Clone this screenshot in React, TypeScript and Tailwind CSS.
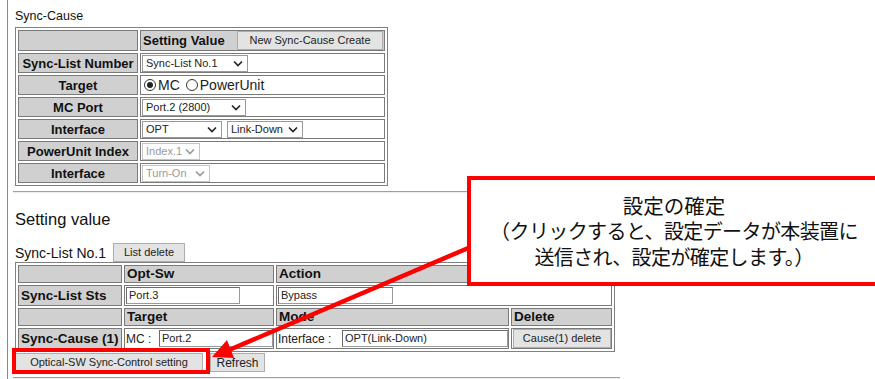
import type { ReactNode } from 'react';

const lbl =
  'border border-[#7a7a7a] bg-[#d0d0d0] font-bold text-[13px] leading-[15px] text-center text-[#111] p-0 h-[20px] whitespace-nowrap';
const val = 'border border-[#7a7a7a] bg-white p-0 pl-[1px] h-[20px] leading-none';
const lbl2 =
  'border border-[#7a7a7a] bg-[#d0d0d0] font-bold text-[13.5px] leading-[16px] text-left text-[#111] p-0 pl-[2px] whitespace-nowrap';
const val2 = 'border border-[#7a7a7a] bg-white p-0 pl-[1px] leading-none';
const btn =
  'h-[19px] border border-[#adadad] bg-[#e3e3e3] text-[11px] text-[#222] leading-none flex items-center justify-center whitespace-nowrap font-normal';

function Chevron({ muted }: { muted?: boolean }) {
  return (
    <svg width="10" height="7" viewBox="0 0 10 7" className="shrink-0">
      <path d="M1 1.5 L5 5.5 L9 1.5" fill="none" stroke={muted ? '#9a9a9a' : '#222'} strokeWidth={1.6} />
    </svg>
  );
}

function Sel({ text, className, disabled }: { text: string; className: string; disabled?: boolean }) {
  return (
    <div
      className={`h-[17px] flex items-center justify-between pl-[3px] pr-[4px] bg-white text-[11px] leading-none border ${
        disabled ? 'border-[#c4c4c4] text-[#9a9a9a]' : 'border-[#9a9a9a] text-[#222]'
      } ${className}`}
    >
      <span className="whitespace-nowrap">{text}</span>
      <Chevron muted={disabled} />
    </div>
  );
}

function Field({ text, className }: { text: string; className: string }) {
  return (
    <div
      className={`h-[17px] shrink-0 flex items-center pl-[2px] bg-white border border-[#9a9a9a] border-t-[#6a6a6a] border-l-[#6a6a6a] text-[11px] text-[#222] leading-none whitespace-nowrap ${className}`}
    >
      {text}
    </div>
  );
}

function Radio({ checked, children }: { checked?: boolean; children: ReactNode }) {
  return (
    <span className="flex items-center gap-[2px] text-[14px] leading-[16px] text-[#222]">
      <span className="w-[12px] h-[12px] rounded-full border border-[#333] bg-white flex items-center justify-center">
        {checked && <span className="w-[6px] h-[6px] rounded-full bg-[#222]" />}
      </span>
      {children}
    </span>
  );
}

export default function App() {
  return (
    <div className="relative w-[875px] h-[379px] overflow-hidden bg-white font-['Liberation_Sans',Arial,sans-serif] text-[#111]">
      <div className="pl-[7px] h-full">
        <div className="border-l border-[#8a8a8a] pl-[7px] h-full">
          {/* Sync-Cause */}
          <div className="pt-[9px] mb-[4px] text-[12.5px] leading-[14px]">Sync-Cause</div>
          <table className="table-fixed border-separate border-spacing-[2px] border border-[#808080] w-[373px] leading-none">
            <colgroup>
              <col className="w-[120px]" />
              <col className="w-[245px]" />
            </colgroup>
            <tbody>
              <tr>
                <td className={lbl}></td>
                <td className={`${lbl} text-left`}>
                  <div className="flex items-center justify-between pl-[2px] pr-[1px]">
                    <span>Setting Value</span>
                    <button className={`${btn} w-[146px] h-[18px] text-[11.5px]`}>New Sync-Cause Create</button>
                  </div>
                </td>
              </tr>
              <tr>
                <td className={lbl}>Sync-List Number</td>
                <td className={val}>
                  <Sel text="Sync-List No.1" className="w-[106px]" />
                </td>
              </tr>
              <tr>
                <td className={lbl}>Target</td>
                <td className={val}>
                  <div className="flex items-center gap-[6px] pl-[2px]">
                    <Radio checked>MC</Radio>
                    <Radio>PowerUnit</Radio>
                  </div>
                </td>
              </tr>
              <tr>
                <td className={lbl}>MC Port</td>
                <td className={val}>
                  <Sel text="Port.2 (2800)" className="w-[104px]" />
                </td>
              </tr>
              <tr>
                <td className={lbl}>Interface</td>
                <td className={val}>
                  <div className="flex items-center gap-[5px]">
                    <Sel text="OPT" className="w-[80px]" />
                    <Sel text="Link-Down" className="w-[76px]" />
                  </div>
                </td>
              </tr>
              <tr>
                <td className={lbl}>PowerUnit Index</td>
                <td className={val}>
                  <Sel text="Index.1" className="w-[58px]" disabled />
                </td>
              </tr>
              <tr>
                <td className={lbl}>Interface</td>
                <td className={val}>
                  <Sel text="Turn-On" className="w-[68px]" disabled />
                </td>
              </tr>
            </tbody>
          </table>

          <div className="mt-[5px] -ml-[2px] w-[607px] h-[2px] border-t border-[#a0a0a0] border-b border-b-[#ececec]" />

          {/* Setting value */}
          <div className="mt-[17px] h-[19px] text-[16.5px] leading-[19px]">Setting value</div>
          <div className="mt-[14px] h-[19px] flex items-end gap-[7px]">
            <span className="text-[14px] leading-[18px]">Sync-List No.1</span>
            <button className={`${btn} w-[72px] text-[11.5px]`}>List delete</button>
          </div>
          <table className="table-fixed border-separate border-spacing-[2px] border border-[#808080] w-[600px] leading-none">
            <colgroup>
              <col className="w-[104px]" />
              <col className="w-[150px]" />
              <col className="w-[233px]" />
              <col className="w-[101px]" />
            </colgroup>
            <tbody>
              <tr>
                <td className={`${lbl2} h-[18px]`}></td>
                <td className={`${lbl2} h-[18px]`}>Opt-Sw</td>
                <td className={`${lbl2} h-[18px]`} colSpan={2}>
                  Action
                </td>
              </tr>
              <tr>
                <td className={`${lbl2} h-[21px]`}>Sync-List Sts</td>
                <td className={`${val2} h-[21px]`}>
                  <Field text="Port.3" className="w-[114px]" />
                </td>
                <td className={`${val2} h-[21px]`} colSpan={2}>
                  <Field text="Bypass" className="w-[115px]" />
                </td>
              </tr>
              <tr>
                <td className={`${lbl2} h-[18px]`}></td>
                <td className={`${lbl2} h-[18px]`}>Target</td>
                <td className={`${lbl2} h-[18px]`}>Mode</td>
                <td className={`${lbl2} h-[18px]`}>Delete</td>
              </tr>
              <tr>
                <td className={`${lbl2} h-[21px]`}>Sync-Cause (1)</td>
                <td className={`${val2} h-[21px]`}>
                  <div className="flex items-center text-[12px] text-[#222]">
                    <span className="w-[33px] whitespace-nowrap">MC :</span>
                    <Field text="Port.2" className="w-[114px]" />
                  </div>
                </td>
                <td className={`${val2} h-[21px]`}>
                  <div className="flex items-center text-[12px] text-[#222]">
                    <span className="w-[64px] whitespace-nowrap">Interface :</span>
                    <Field text="OPT(Link-Down)" className="w-[166px]" />
                  </div>
                </td>
                <td className={`${val2} h-[21px] pl-0`}>
                  <button className={`${btn} w-[98px] mx-auto`}>Cause(1) delete</button>
                </td>
              </tr>
            </tbody>
          </table>
          <div className="mt-[1px] flex gap-[7px]">
            <button className={`${btn} w-[188px] text-[11.5px]`}>Optical-SW Sync-Control setting</button>
            <button className={`${btn} w-[55px] text-[12px]`}>Refresh</button>
          </div>
          <div className="mt-[5px] -ml-[2px] w-[607px] h-[2px] border-t border-[#a0a0a0] border-b border-b-[#ececec]" />
        </div>
      </div>

      {/* arrow */}
      <svg className="absolute left-0 top-0" width="875" height="379" viewBox="0 0 875 379">
        <line x1="480" y1="243" x2="229" y2="350" stroke="#ff0000" strokeWidth={4.5} />
        <polygon points="212,357 234,358 227,340" fill="#ff0000" />
      </svg>

      {/* callout */}
      <div className="absolute left-[467px] top-[176px] w-[414px] h-[110px] border-[4px] border-[#ff0000] bg-white flex flex-col items-center justify-center font-['Noto_Sans_CJK_JP',sans-serif] text-[20px] leading-[26px] tracking-[-0.6px] text-[#111]">
        <span className="text-[20.5px] tracking-[0px]">設定の確定</span>
        <span>（クリックすると、設定データが本装置に</span>
        <span>送信され、設定が確定します。）</span>
      </div>

      {/* highlight */}
      <div className="absolute left-[12px] top-[348px] w-[198px] h-[26px] border-[4px] border-[#ff0000]" />
    </div>
  );
}
